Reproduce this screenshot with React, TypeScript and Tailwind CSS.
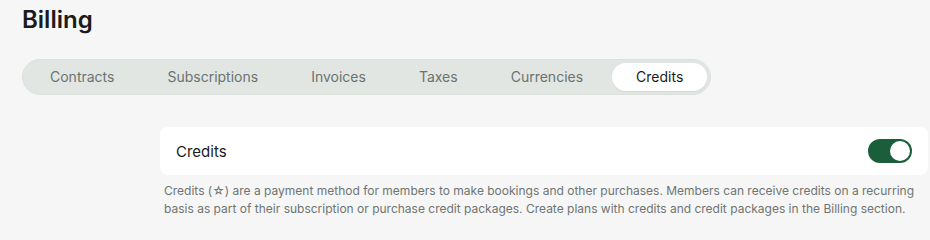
import { useState } from 'react';

const TABS = ['Contracts', 'Subscriptions', 'Invoices', 'Taxes', 'Currencies', 'Credits'];

export default function App() {
  const [active, setActive] = useState('Credits');
  const [enabled, setEnabled] = useState(true);

  return (
    <div
      className="min-h-[240px] overflow-hidden bg-[#f6f6f6] px-[22px] pt-[6px]"
      style={{ fontFamily: 'Inter, "Liberation Sans", sans-serif' }}
    >
      <h1 className="text-[24px] font-semibold leading-[28px] text-[#1b1b1b]">Billing</h1>

      <div className="mt-[25px] inline-flex items-center gap-[5px] rounded-full border border-[#dde1de] bg-[#e2e6e3] p-[3px]">
        {TABS.map((tab) => (
          <button
            key={tab}
            type="button"
            onClick={() => setActive(tab)}
            className={`h-7 rounded-full px-6 text-[14px] leading-7 ${
              tab === active
                ? 'bg-white text-[#1b1b1b] shadow-[0_1px_2px_rgba(0,0,0,0.06)]'
                : 'text-[#6b7370]'
            }`}
          >
            {tab}
          </button>
        ))}
      </div>

      <div className="ml-[138px] mt-[32px] w-[768px]">
        <div className="flex h-12 items-center justify-between rounded-lg bg-white pl-4 pr-4">
          <span className="pt-[2px] text-[15px] text-[#1b1b1b]">Credits</span>
          <button
            type="button"
            onClick={() => setEnabled(!enabled)}
            className={`flex h-6 w-11 items-center rounded-full p-[2px] ${
              enabled ? 'justify-end bg-[#1b5e3b]' : 'justify-start bg-[#cfd5d2]'
            }`}
          >
            <span className="h-5 w-5 rounded-full bg-white" />
          </button>
        </div>

        <p className="mt-[7px] px-1 text-[12px] leading-[18px] text-[#6f7572]">
          Credits (☆) are a payment method for members to make bookings and other purchases. Members can
          receive credits on a recurring basis as part of their subscription or purchase credit packages.
          Create plans with credits and credit packages in the Billing section.
        </p>

        <div className="mt-[26px] h-12 rounded-lg bg-white" />
      </div>
    </div>
  );
}
